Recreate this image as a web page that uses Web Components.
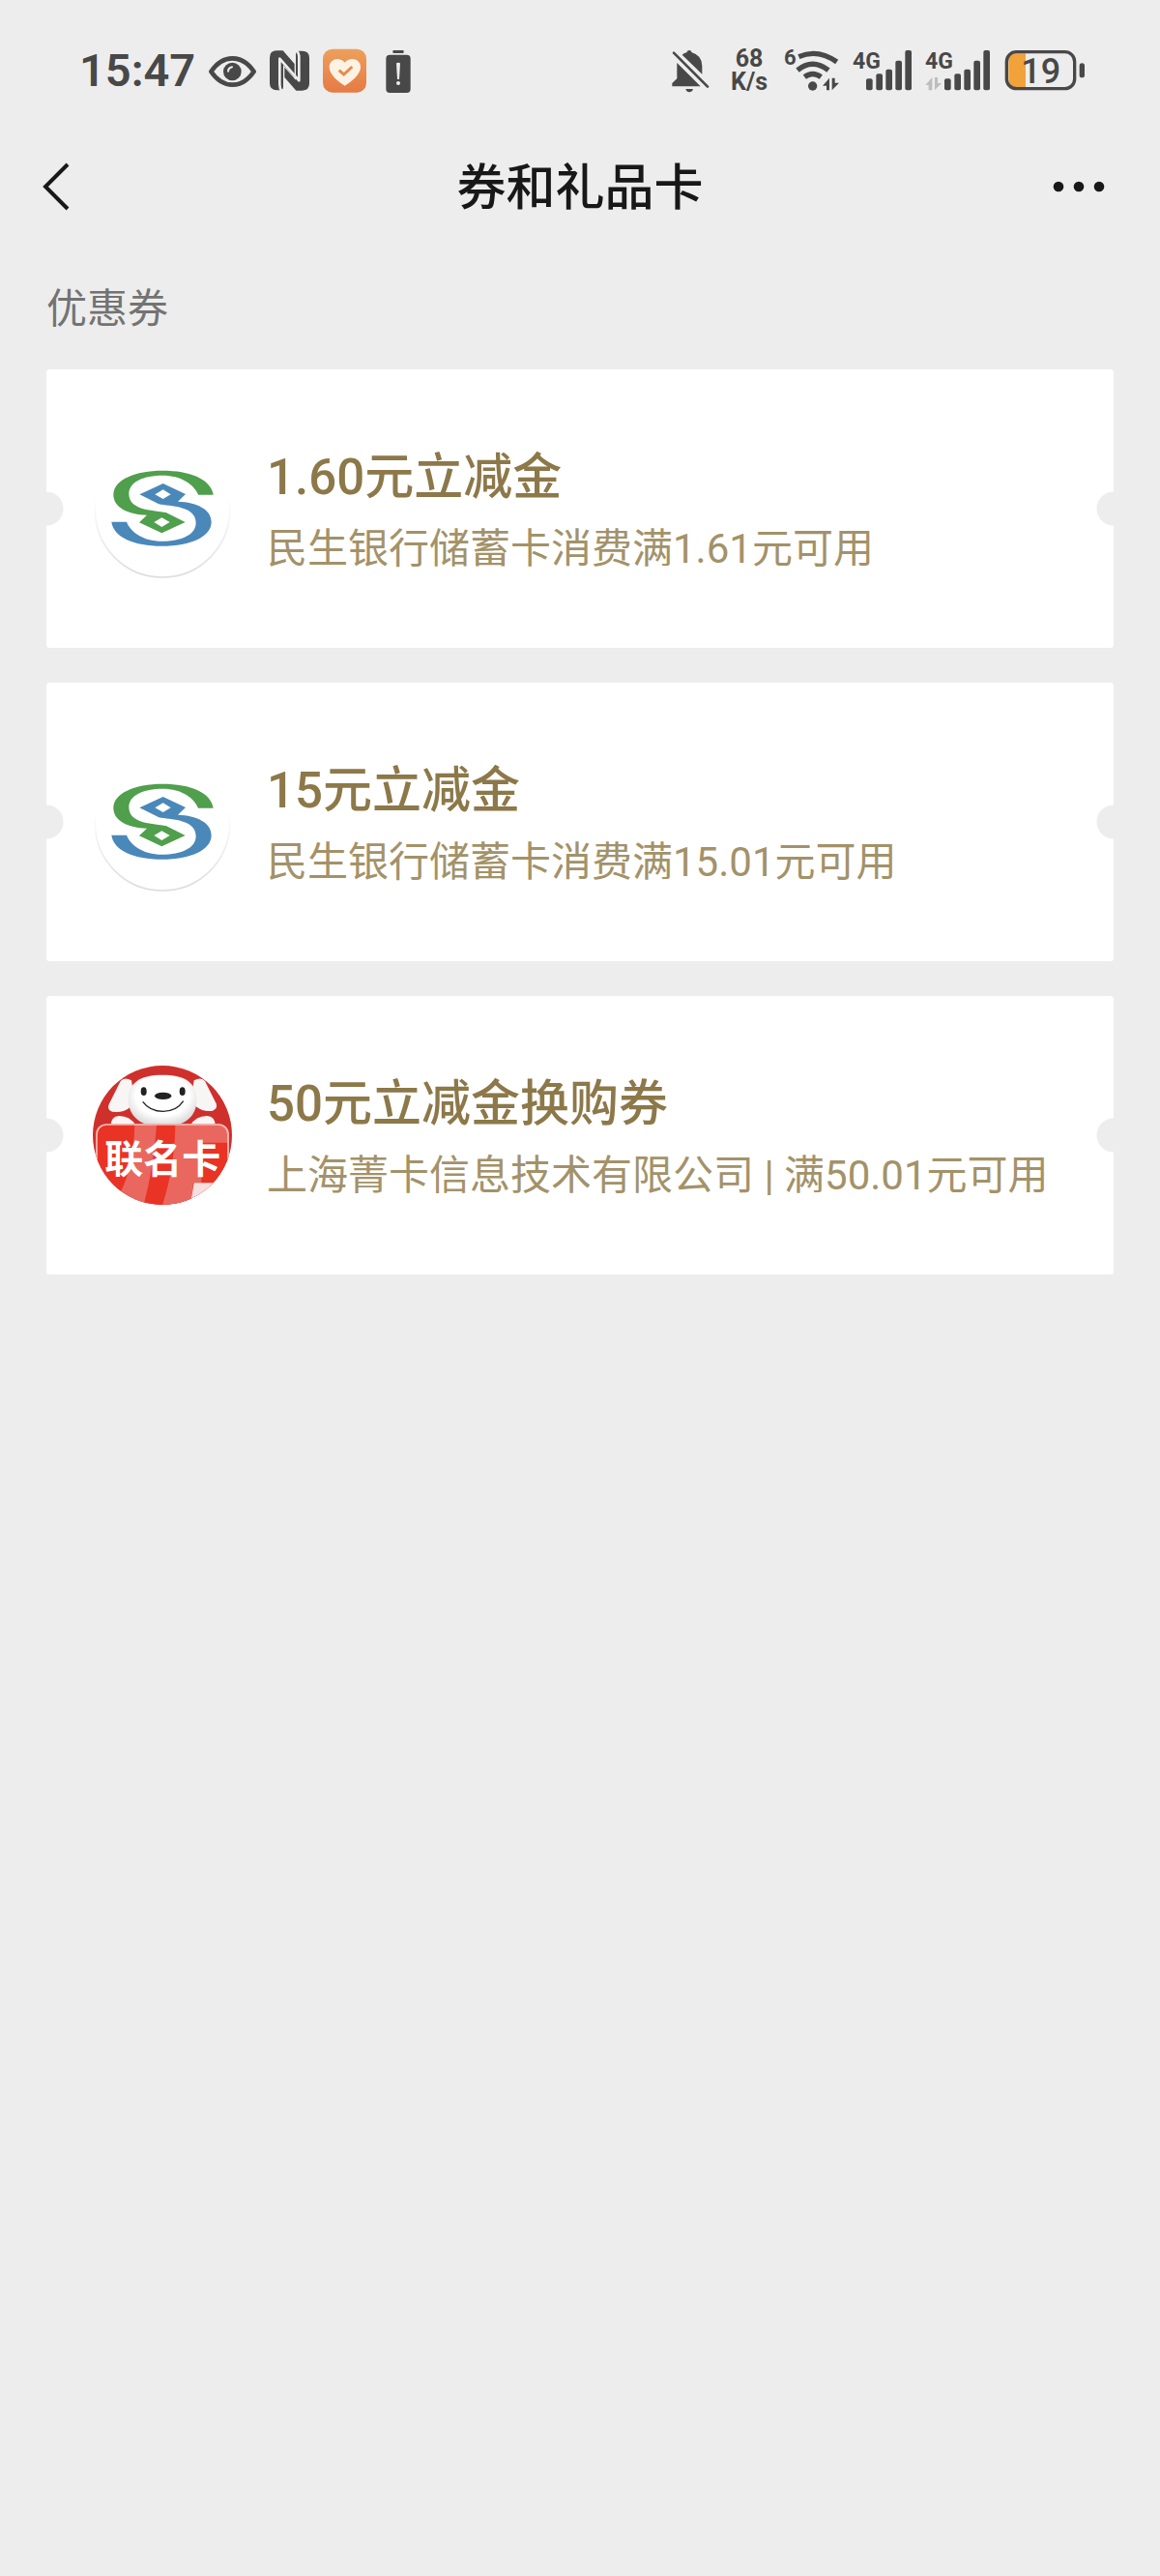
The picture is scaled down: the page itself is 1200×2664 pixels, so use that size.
<!DOCTYPE html>
<html lang="zh-CN">
<head>
<meta charset="UTF-8">
<meta name="viewport" content="width=device-width, initial-scale=1.0">
<title>券和礼品卡</title>
<style>
    body {
        margin: 0;
        min-height: 100vh;
        background: #ededed;
        font-family: Roboto, "Noto Sans CJK SC", sans-serif;
    }
</style>
</head>
<body>
<coupon-page>
    <status-bar slot="status" time="15:47"></status-bar>
    <nav-bar slot="nav">券和礼品卡</nav-bar>
    <coupon-section label="优惠券">
        <coupon-card>
            <bank-logo slot="logo"></bank-logo>
            <span slot="title">1.60元立减金</span>
            <span slot="desc">民生银行储蓄卡消费满1.61元可用</span>
        </coupon-card>
        <coupon-card>
            <bank-logo slot="logo"></bank-logo>
            <span slot="title">15元立减金</span>
            <span slot="desc">民生银行储蓄卡消费满15.01元可用</span>
        </coupon-card>
        <coupon-card>
            <dog-logo slot="logo"></dog-logo>
            <span slot="title">50元立减金换购券</span>
            <span slot="desc">上海菁卡信息技术有限公司 | 满50.01元可用</span>
        </coupon-card>
    </coupon-section>
</coupon-page>

<script>
// Status icons share one grid: 3 units per pixel, 46px tall
const STATUS_ICONS = {
    eye: {
        viewBox: "470 60 147 138",
        body: `
            <path d="M477 132 Q505 91 543 91 Q582 91 610 132 Q582 173 543 173 Q505 173 477 132Z" fill="none" stroke="currentColor" stroke-width="14" stroke-linejoin="round"/>
            <circle cx="543" cy="132" r="28"/>
            <path d="M530 131 Q531 120 542 118" fill="none" stroke="#ededed" stroke-width="6" stroke-linecap="round"/>`
    },
    nfc: {
        viewBox: "662 60 123 138",
        body: `
            <path d="M684 67 H703 L739 108 V151 L704 112 V180 Q704 188 698 190 H684 Q662 190 662 168 V89 Q662 67 684 67Z" />
            <path d="M763 191 H744 L708 150 V119 L743 158 V78 Q743 70 749 68 H763 Q785 68 785 90 V169 Q785 191 763 191Z"/>
            <path d="M699 192 Q693 185 693 172 V92 L753 160 V88 Q753 73 744 65" fill="none" stroke="#ededed" stroke-width="8" stroke-linejoin="round"/>`
    },
    heart: {
        viewBox: "822 60 135 138",
        body: `
            <defs><linearGradient id="g" x1="0" y1="0" x2="0" y2="1"><stop offset="0" stop-color="#eda05c"/><stop offset="1" stop-color="#e67a45"/></linearGradient></defs>
            <rect x="822" y="62" width="135" height="135" rx="30" fill="url(#g)"/>
            <path d="M890 176 C870 164 842 142 842 118 C842 92 874 84 890 104 C906 84 939 92 939 118 C939 142 910 164 890 176Z" fill="#fdf3e4"/>
            <path d="M872 128 L887 141 L913 117" fill="none" stroke="#e98a4e" stroke-width="9"/>`
    },
    alert: {
        viewBox: "1002 60 114 138",
        body: `
            <rect x="1042" y="66" width="34" height="9" rx="3"/>
            <rect x="1021" y="80" width="76" height="118" rx="12"/>
            <path d="M1053 106 Q1059 102 1065 106 L1062 156 H1056Z" fill="#ededed"/>
            <circle cx="1059" cy="168" r="6" fill="#ededed"/>`
    },
    mute: {
        viewBox: "78 60 132 138",
        body: `
            <path d="M94 105 L167 178 H79 V168 L94 154Z"/>
            <path d="M110 80 Q117 74 124 73 Q126 66 132 66 Q138 66 140 73 Q172 82 172 115 V140Z"/>
            <path d="M84 74 L189 179" fill="none" stroke="currentColor" stroke-width="8" stroke-linecap="round"/>
            <path d="M121 186 H144 Q141 196 132 196 Q124 196 121 186Z"/>`
    },
    wifi: {
        viewBox: "432 60 171 138",
        body: `
            <text x="432" y="112" font-size="66" font-weight="700">6</text>
            <g fill="none" stroke="currentColor" stroke-width="16">
                <path d="M478 86 Q536 60 596 102"/>
                <path d="M474 128 Q520 90 570 128"/>
                <path d="M496 149 Q521 130 547 149"/>
            </g>
            <circle cx="521" cy="177" r="14"/>
            <path d="M552 176 L573 152 V190 H564 V176Z M581 152 V190 L603 167 H590 V152Z"/>`
    },
    signal: {
        viewBox: "638 60 183 138",
        body: `
            <text x="638" y="123" font-size="69" font-weight="700">4G</text>
            <rect x="680" y="154" width="20" height="36" rx="6"/>
            <rect x="711" y="139" width="20" height="51" rx="6"/>
            <rect x="741" y="125" width="20" height="65" rx="6"/>
            <rect x="771" y="98" width="20" height="92" rx="6"/>
            <rect x="801" y="66" width="20" height="124" rx="6"/>`
    },
    signal2: {
        viewBox: "170 60 201 138",
        body: `
            <text x="170" y="123" font-size="69" font-weight="700">4G</text>
            <path d="M171 174 L192 150 V190 H181 V174Z M200 150 V190 L221 168 H209 V150Z" fill="#bdbdbd"/>
            <rect x="230" y="154" width="20" height="36" rx="6"/>
            <rect x="261" y="139" width="20" height="51" rx="6"/>
            <rect x="291" y="125" width="20" height="65" rx="6"/>
            <rect x="321" y="98" width="20" height="92" rx="6"/>
            <rect x="351" y="66" width="20" height="124" rx="6"/>`
    },
    battery: {
        viewBox: "415 60 252 138",
        body: `
            <path d="M484 76 H452 Q431 76 431 100 V156 Q431 180 452 180 H484Z" fill="#f2a23a"/>
            <rect x="425" y="71" width="211" height="114" rx="30" fill="none" stroke="currentColor" stroke-width="10"/>
            <rect x="651" y="106" width="16" height="45" rx="8"/>
            <text x="470" y="168" font-size="108" font-weight="500">19</text>`
    }
};

class StatusIcon extends HTMLElement {
    constructor() {
        super();
        this.attachShadow({ mode: "open" });
    }

    connectedCallback() {
        const icon = STATUS_ICONS[this.getAttribute("name")];
        const width = icon.viewBox.split(" ")[2] / 3;
        this.shadowRoot.innerHTML = `
            <style>
                :host {
                    display: block;
                    flex: none;
                }
                svg {
                    display: block;
                    height: 46px;
                    fill: currentColor;
                    overflow: visible;
                }
            </style>
            <svg width="${width}" viewBox="${icon.viewBox}">${icon.body}</svg>
        `;
    }
}

class StatusBar extends HTMLElement {
    constructor() {
        super();
        this.attachShadow({ mode: "open" });
    }

    connectedCallback() {
        this.shadowRoot.innerHTML = `
            <style>
                :host {
                    display: flex;
                    align-items: center;
                    justify-content: space-between;
                    height: 146px;
                    padding: 0 78px 0 82px;
                    color: #484848;
                }
                .group {
                    display: flex;
                    align-items: center;
                    gap: 14px;
                }
                .time {
                    font-size: 47px;
                    font-weight: 600;
                    line-height: 48px;
                }
                .speed {
                    display: flex;
                    flex-direction: column;
                    width: 44px;
                    font-size: 25px;
                    font-weight: 700;
                    line-height: 24px;
                    text-align: center;
                }
            </style>
            <div class="group">
                <span class="time">${this.getAttribute("time")}</span>
                <status-icon name="eye"></status-icon>
                <status-icon name="nfc"></status-icon>
                <status-icon name="heart"></status-icon>
                <status-icon name="alert"></status-icon>
            </div>
            <div class="group">
                <status-icon name="mute"></status-icon>
                <div class="speed"><span>68</span><span>K/s</span></div>
                <status-icon name="wifi"></status-icon>
                <status-icon name="signal"></status-icon>
                <status-icon name="signal2"></status-icon>
                <status-icon name="battery"></status-icon>
            </div>
        `;
    }
}

class NavBar extends HTMLElement {
    constructor() {
        super();
        this.attachShadow({ mode: "open" });
        this.shadowRoot.innerHTML = `
            <style>
                :host {
                    display: flex;
                    align-items: center;
                    justify-content: space-between;
                    height: 94px;
                    padding: 0 36px;
                    color: #181818;
                }
                h1 {
                    margin: 0;
                    padding-top: 4px;
                    font-size: 51px;
                    font-weight: 500;
                    line-height: 72px;
                }
                button {
                    display: flex;
                    align-items: center;
                    width: 72px;
                    height: 72px;
                    padding: 0;
                    border: 0;
                    background: none;
                    color: inherit;
                }
            </style>
            <button type="button" aria-label="返回">
                <svg width="48" height="52" viewBox="0 0 48 52" fill="none" stroke="currentColor" stroke-width="4"><path d="M34 3 L11 26 L34 49"/></svg>
            </button>
            <h1><slot></slot></h1>
            <button type="button" aria-label="更多">
                <svg width="72" height="12" viewBox="-6 0 72 12" fill="currentColor"><circle cx="-3" cy="6" r="5.3"/><circle cx="18" cy="6" r="5.3"/><circle cx="39" cy="6" r="5.3"/></svg>
            </button>
        `;
        this.shadowRoot.querySelector("[aria-label='更多'] svg").style.overflow = "visible";
    }
}

class BankLogo extends HTMLElement {
    constructor() {
        super();
        this.attachShadow({ mode: "open" });
        this.shadowRoot.innerHTML = `
            <style>
                :host {
                    display: block;
                }
                svg {
                    display: block;
                    width: 144px;
                    height: 144px;
                }
            </style>
            <svg viewBox="48 -18 432 432">
                <defs>
                    <linearGradient id="rim" x1="0" y1="0" x2="0" y2="1"><stop offset="0.4" stop-color="#fff"/><stop offset="1" stop-color="#dcdcdc"/></linearGradient>
                    <path id="half" fill-rule="evenodd" d="M422 155 C415 107 352 80 265 80 C175 80 112 110 112 155 C112 194 158 216 216 218 L192 241 L262 274 L335 240 L275 210 C240 203 160 205 160 152 C160 115 205 95 265 95 C325 95 364 125 375 155Z M262 226 L287 240 L262 255 L238 240Z"/>
                </defs>
                <circle cx="264" cy="202" r="209" fill="#fff" stroke="url(#rim)" stroke-width="5"/>
                <use href="#half" fill="#4f9f4c"/>
                <use href="#half" fill="#4a88b9" transform="rotate(180 264 197)"/>
            </svg>
        `;
    }
}

class DogLogo extends HTMLElement {
    constructor() {
        super();
        this.attachShadow({ mode: "open" });
        this.shadowRoot.innerHTML = `
            <style>
                :host {
                    display: block;
                }
                svg {
                    display: block;
                    width: 144px;
                    height: 144px;
                }
            </style>
            <svg viewBox="48 66 432 432">
                <defs>
                    <clipPath id="round"><circle cx="264" cy="282" r="216"/></clipPath>
                    <clipPath id="panel"><rect x="58" y="247" width="412" height="270" rx="30"/></clipPath>
                    <radialGradient id="fur" cy="0.4" r="0.6"><stop offset="0.65" stop-color="#fff"/><stop offset="1" stop-color="#d8d8d8"/></radialGradient>
                </defs>
                <g clip-path="url(#round)">
                    <rect x="48" y="66" width="432" height="432" fill="#cf302c"/>
                    <g fill="#f8f5f5">
                        <path d="M104 252 Q104 224 130 222 Q164 222 182 252Z"/>
                        <path d="M428 252 Q428 224 402 222 Q368 222 350 252Z"/>
                        <path d="M168 112 Q146 100 134 114 L98 186 Q92 204 108 209 Q140 214 160 198 L178 176Z"/>
                        <path d="M362 112 Q384 100 396 114 L431 184 Q436 200 420 206 Q390 210 370 194 L352 176Z"/>
                    </g>
                    <path fill="url(#fur)" d="M264 95 C335 95 368 118 370 170 C372 225 330 256 264 256 C200 256 158 225 158 170 C160 118 195 95 264 95Z"/>
                    <ellipse cx="206" cy="146" rx="9" ry="13" fill="#222"/>
                    <ellipse cx="326" cy="146" rx="9" ry="13" fill="#222"/>
                    <ellipse cx="266" cy="160" rx="26" ry="11" fill="#222"/>
                    <path d="M203 178 Q225 208 266 208 Q308 208 329 176" fill="none" stroke="#222" stroke-width="4"/>
                    <g clip-path="url(#panel)">
                        <rect x="58" y="247" width="412" height="270" fill="#e93325"/>
                        <path d="M178 247 H246 C240 330 228 420 205 500 H110 C160 430 176 340 178 247Z" fill="#ea6760"/>
                        <path d="M304 247 H470 V305 H385 V430 H360 L350 500 H264 C290 420 304 330 304 247Z" fill="#ea6760"/>
                        <path d="M362 430 H450 L400 500 H350Z" fill="#f8dedd"/>
                    </g>
                    <rect x="60" y="249" width="408" height="290" rx="30" fill="none" stroke="#f6c0bc" stroke-width="5"/>
                    <text x="265" y="398" font-size="120" font-weight="700" fill="#fff" text-anchor="middle">联名卡</text>
                </g>
            </svg>
        `;
    }
}

class CouponCard extends HTMLElement {
    constructor() {
        super();
        this.attachShadow({ mode: "open" });
        this.shadowRoot.innerHTML = `
            <style>
                :host {
                    display: flex;
                    align-items: center;
                    gap: 36px;
                    height: 288px;
                    padding: 0 48px;
                    box-sizing: border-box;
                    border-radius: 3px;
                    /* ticket notches on both edges */
                    background:
                        radial-gradient(circle at 0 50%, #ededed 17px, transparent 18px),
                        radial-gradient(circle at 100% 50%, #ededed 17px, transparent 18px),
                        #fff;
                }
                .text {
                    display: flex;
                    flex-direction: column;
                    gap: 8px;
                    min-width: 0;
                    padding-top: 4px;
                }
                .title {
                    color: #8c7849;
                    font-size: 51px;
                    font-weight: 500;
                    line-height: 72px;
                }
                .desc {
                    color: #a39269;
                    font-size: 42px;
                    line-height: 60px;
                }
            </style>
            <slot name="logo"></slot>
            <div class="text">
                <div class="title"><slot name="title"></slot></div>
                <div class="desc"><slot name="desc"></slot></div>
            </div>
        `;
    }
}

class CouponSection extends HTMLElement {
    constructor() {
        super();
        this.attachShadow({ mode: "open" });
    }

    connectedCallback() {
        this.shadowRoot.innerHTML = `
            <style>
                :host {
                    display: block;
                    padding: 50px 48px;
                }
                h2 {
                    margin: 0 0 32px;
                    color: #737373;
                    font-size: 42px;
                    font-weight: 400;
                    line-height: 60px;
                }
                .list {
                    display: flex;
                    flex-direction: column;
                    gap: 36px;
                }
            </style>
            <h2>${this.getAttribute("label")}</h2>
            <div class="list"><slot></slot></div>
        `;
    }
}

class CouponPage extends HTMLElement {
    constructor() {
        super();
        this.attachShadow({ mode: "open" });
        this.shadowRoot.innerHTML = `
            <style>
                :host {
                    display: block;
                }
            </style>
            <header>
                <slot name="status"></slot>
                <slot name="nav"></slot>
            </header>
            <main><slot></slot></main>
        `;
    }
}

customElements.define("status-icon", StatusIcon);
customElements.define("status-bar", StatusBar);
customElements.define("nav-bar", NavBar);
customElements.define("bank-logo", BankLogo);
customElements.define("dog-logo", DogLogo);
customElements.define("coupon-card", CouponCard);
customElements.define("coupon-section", CouponSection);
customElements.define("coupon-page", CouponPage);
</script>
</body>
</html>
